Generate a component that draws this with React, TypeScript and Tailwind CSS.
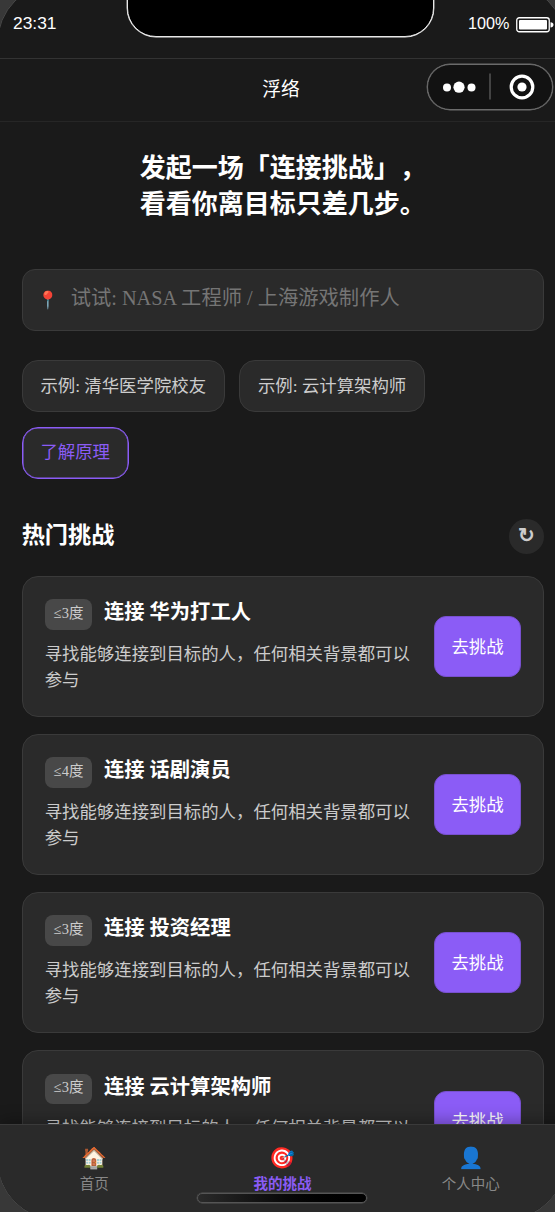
const examples = ["示例: 清华医学院校友", "示例: 云计算架构师"];

const challenges = [
  { degree: "≤3度", title: "连接 华为打工人" },
  { degree: "≤4度", title: "连接 话剧演员" },
  { degree: "≤3度", title: "连接 投资经理" },
  { degree: "≤3度", title: "连接 云计算架构师" },
];

const tabs = [
  { icon: "🏠", label: "首页", active: false },
  { icon: "🎯", label: "我的挑战", active: true },
  { icon: "👤", label: "个人中心", active: false },
];

const StatusBar = () => (
  <div className="relative flex h-[59px] shrink-0 items-start justify-between border-b border-[#333] pr-[11px] pl-[13px] font-['Liberation_Sans',sans-serif] text-white">
    <span className="mt-[13px] text-[17.4px] leading-5">23:31</span>
    <div className="absolute -top-[41px] left-[127.4px] h-[78px] w-[307px] rounded-[29px] border border-[#e8e8e8] bg-black shadow-[0_0_0_0.4px_#e8e8e8]" />
    <div className="mt-[13px] flex items-center">
      <span className="text-[16.2px] leading-[21px]">100%</span>
      <svg className="mt-[3px] ml-[6.5px]" width="38" height="16" viewBox="0 0 38 16">
        <rect x="0.75" y="0.75" width="32.5" height="14" rx="2.5" fill="none" stroke="#fff" strokeWidth="1.3" />
        <rect x="3" y="3" width="28" height="9.5" rx="1" fill="#fff" />
        <path d="M34.5 5.2c1.8 0 3 1 3 2.6s-1.2 2.6-3 2.6z" fill="#fff" />
      </svg>
    </div>
  </div>
);

const TitleBar = () => (
  <div className="relative flex h-[63px] shrink-0 items-center justify-center border-b border-[#262626]">
    <h1 className="pr-[3px] text-[18.8px] text-white">浮络</h1>
    <div className="absolute top-[5px] left-[427px] flex h-[46px] w-[126px] items-center rounded-full border border-[#6b6b6b] bg-[#121212] shadow-[0_0_0_0.4px_#6b6b6b]">
      <svg width="124" height="44" viewBox="0 0 124 44">
        <circle cx="19" cy="22.5" r="4" fill="#fff" />
        <circle cx="31" cy="22.2" r="5.6" fill="#fff" />
        <circle cx="43.5" cy="22.5" r="4" fill="#fff" />
        <path d="M62 8.5v26" stroke="#555" strokeWidth="1.5" />
        <circle cx="94" cy="22" r="10.8" fill="none" stroke="#fff" strokeWidth="3.2" />
        <circle cx="94" cy="22" r="4.6" fill="#fff" />
      </svg>
    </div>
  </div>
);

const ChallengeCard = ({ degree, title }: { degree: string; title: string }) => (
  <div className="flex h-[140.5px] shrink-0 items-center justify-between rounded-[16px] border border-[#3a3a3a] bg-[#2a2a2a] pt-px pr-[21.5px] pl-[22px]">
    <div className="flex h-[95px] w-[374px] flex-col">
      <div className="flex h-[31px] items-start">
        <span className="flex h-[30.5px] items-center rounded-lg bg-[#484848] px-[9px] pb-[2px] text-[14.5px] text-[#ccc]">
          {degree}
        </span>
        <h3 className="mt-[1px] ml-[11.5px] text-[20.3px] leading-[24px] font-bold text-white">{title}</h3>
      </div>
      <p className="mt-[10.5px] text-[17.4px] leading-[26px] text-[#ccc]">
        寻找能够连接到目标的人，任何相关背景都可以参与
      </p>
    </div>
    <button className="h-[61px] w-[87.5px] shrink-0 rounded-xl border border-[#7850cf] bg-[#8b5cf6] text-[17.4px] text-white">
      去挑战
    </button>
  </div>
);

const TabBar = () => (
  <div className="relative flex h-[96px] shrink-0 border-t border-[#3a3a3a] bg-[#2a2a2a] shadow-[0_-3px_15px_rgba(0,0,0,0.3)]">
    {tabs.map((tab) => (
      <div key={tab.label} className="flex flex-1 flex-col items-center pt-[18px]">
        <span className="text-[20.8px] leading-[30px]">{tab.icon}</span>
        <span
          className={
            tab.active
              ? "text-[14.5px] leading-[22px] font-bold text-[#8b5cf6]"
              : "text-[14.5px] leading-[22px] text-[#888]"
          }
        >
          {tab.label}
        </span>
      </div>
    ))}
    <div className="absolute top-[68px] left-[197px] h-[10px] w-[169.5px] rounded-full border-[1.5px] border-[#555] bg-gradient-to-r from-[#2a2a2a] to-black shadow-[0_0_0_0.4px_#555]" />
  </div>
);

export default function App() {
  return (
    <div className="h-[1212px] w-[555px] overflow-hidden bg-[#383838] font-['Liberation_Serif','Noto_Sans_CJK_SC',serif]">
      <div className="-mt-[17px] -ml-[3px] flex h-[1237px] w-[569px] flex-col overflow-hidden rounded-[60px] border border-[#484848] bg-[#1a1a1a] pt-[16px] pl-[2px]">
        <StatusBar />
        <TitleBar />
        <main className="flex h-[1002px] shrink-0 flex-col overflow-hidden pr-[21.2px] pl-[21.7px]">
          <h2 className="mt-[29px] text-center text-[26px] leading-[36px] font-bold text-white [text-spacing-trim:space-all] [font-kerning:none]">
            发起一场「连接挑战」，
            <br />
            看看你离目标只差几步。
          </h2>
          <div className="mt-[45.5px] flex h-[62px] shrink-0 items-center rounded-[13px] border border-[#3a3a3a] bg-[#2a2a2a] pl-[14px] pb-[2px]">
            <span className="mt-[3px] w-[23px] text-center text-[17.4px]">📍</span>
            <input
              className="ml-[11px] flex-1 bg-transparent text-[20.3px] outline-none placeholder:text-[#757575]"
              placeholder="试试: NASA 工程师 / 上海游戏制作人"
            />
          </div>
          <div className="mt-[29.5px] flex flex-wrap gap-[14.5px] text-[17.4px]">
            {examples.map((text) => (
              <button key={text} className="h-[52px] rounded-[16px] border border-[#3a3a3a] bg-[#2a2a2a] px-[17.7px] text-[#ccc]">
                {text}
              </button>
            ))}
            <button className="h-[52px] rounded-[16px] border border-[#8b5cf6] bg-[#2a2a2a] px-[17.7px] text-[#8b5cf6] shadow-[inset_0_0_0_0.5px_#8b5cf6]">
              了解原理
            </button>
          </div>
          <div className="mt-[40.5px] flex h-[35px] shrink-0 items-center justify-between">
            <h2 className="pb-[3px] text-[23.2px] font-bold text-white">热门挑战</h2>
            <button className="flex size-[35px] items-center justify-center rounded-full bg-[#2a2a2a] pb-[2px] text-[20.3px] font-bold text-[#ccc]">
              ↻
            </button>
          </div>
          <div className="mt-[22px] flex flex-col gap-[17.6px]">
            {challenges.map((item) => (
              <ChallengeCard key={item.title} {...item} />
            ))}
          </div>
        </main>
        <TabBar />
      </div>
    </div>
  );
}
